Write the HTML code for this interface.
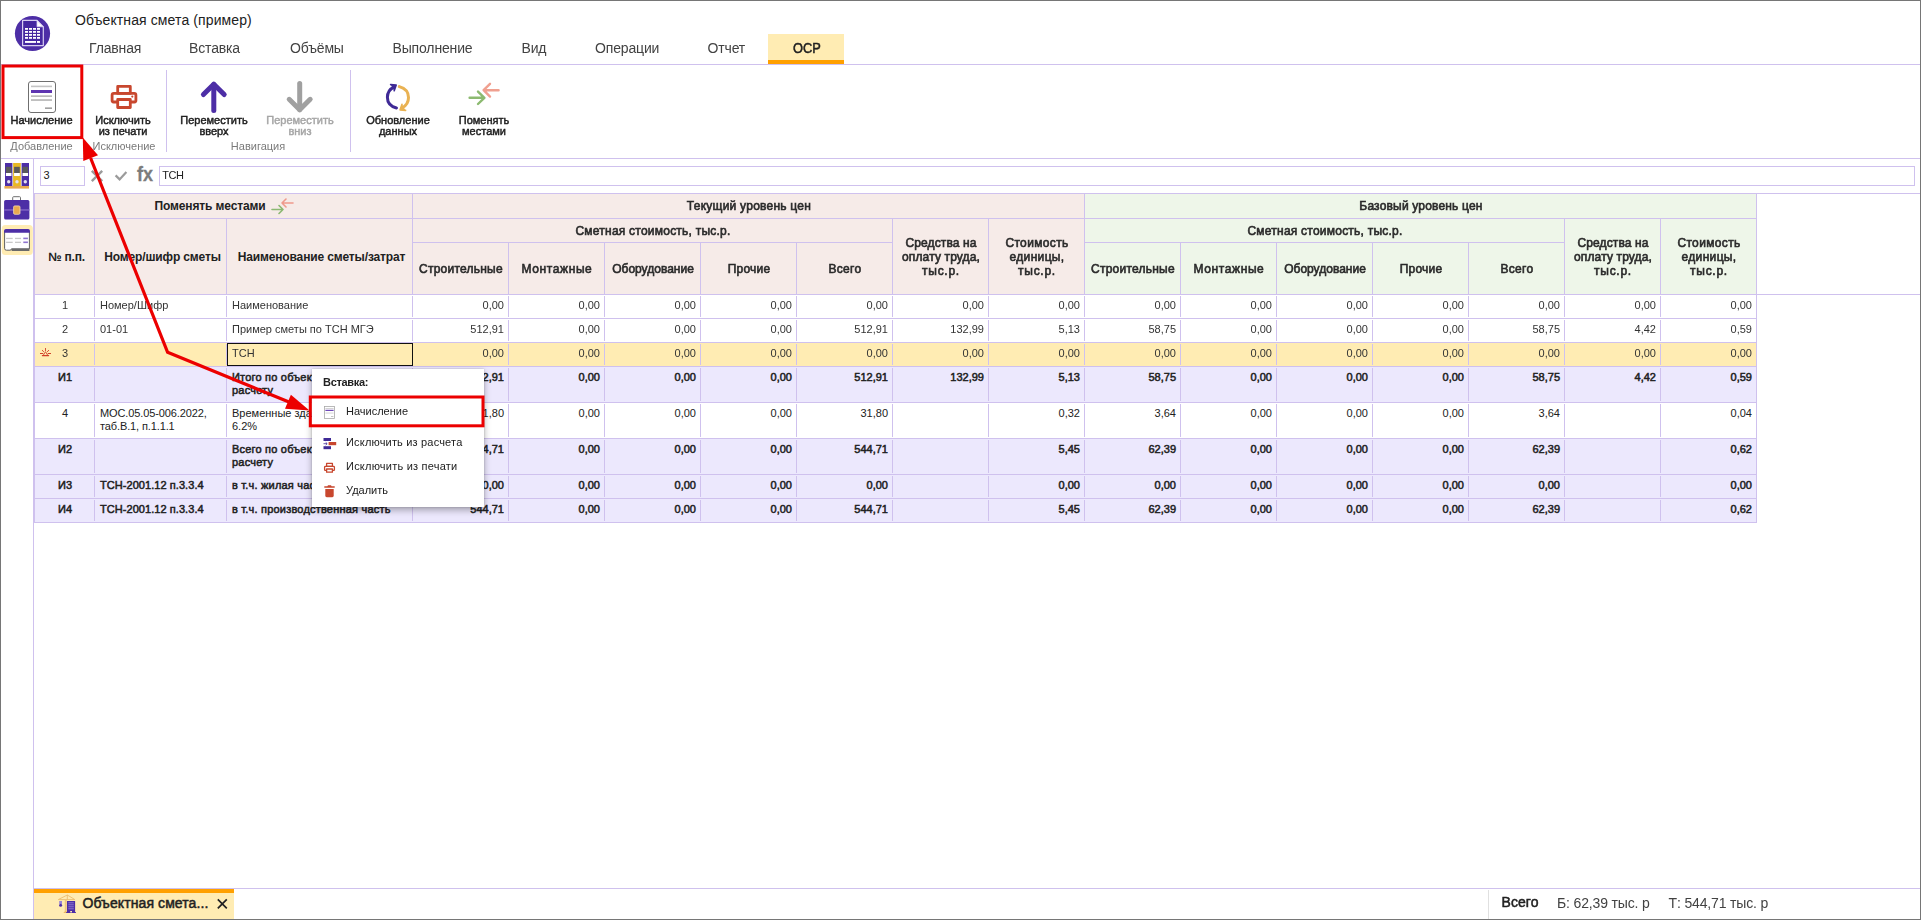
<!DOCTYPE html>
<html lang="ru"><head><meta charset="utf-8"><title>Объектная смета (пример)</title>
<style>
html,body{margin:0;padding:0;}
body{width:1921px;height:920px;position:relative;overflow:hidden;background:#fff;font-family:"Liberation Sans",sans-serif;color:#212121;}
.t{position:absolute;white-space:nowrap;}
.m{font-weight:400 !important;-webkit-text-stroke:0.45px currentColor;}
.bt,.sb,.tabb{-webkit-text-stroke-width:0.5px;}
.hm{font-weight:400 !important;-webkit-text-stroke:0.6px currentColor;color:#2a2a2a;}
.b{position:absolute;}
.c{position:absolute;box-sizing:border-box;overflow:hidden;font-size:11px;line-height:13px;white-space:nowrap;}
.h{position:absolute;box-sizing:border-box;display:flex;align-items:center;justify-content:center;text-align:center;font-weight:700;font-size:12px;line-height:14px;}
svg{position:absolute;overflow:visible;}
</style></head><body>

<svg style="left:14px;top:15px" width="37" height="37" viewBox="0 0 37 37">
<circle cx="18.5" cy="18.5" r="17.6" fill="#4d2ea6"/>
<path d="M8.6 5.4 H23 L29.3 11.8 V30.6 H8.6 Z" fill="#4527a0" stroke="#d9d0f2" stroke-width="1.2" stroke-linejoin="round"/>
<path d="M23 5.4 V11.8 H29.3 Z" fill="#ffffff" stroke="#d9d0f2" stroke-width="0.8"/>
<g fill="#fff">
<rect x="11" y="13" width="3" height="1.8"/><rect x="15" y="13" width="3" height="1.8"/><rect x="19" y="13" width="3" height="1.8"/><rect x="23" y="13" width="3" height="1.8"/>
<rect x="11" y="16" width="3" height="1.8"/><rect x="15" y="16" width="3" height="1.8"/><rect x="19" y="16" width="3" height="1.8"/><rect x="23" y="16" width="3" height="1.8"/>
<rect x="11" y="19" width="3" height="1.8"/><rect x="15" y="19" width="3" height="1.8"/><rect x="19" y="19" width="3" height="1.8"/><rect x="23" y="19" width="3" height="1.8"/>
<rect x="11" y="22" width="3" height="1.8"/><rect x="15" y="22" width="3" height="1.8"/><rect x="19" y="22" width="3" height="1.8"/><rect x="23" y="22" width="3" height="1.8"/>
<rect x="11" y="26" width="11" height="1.9"/><rect x="23" y="26" width="3" height="1.9"/>
</g></svg>
<div class="t title" style="left:75px;top:12px;font-size:14px;line-height:16px;font-weight:400;color:#212121;letter-spacing:0.11px;">Объектная смета (пример)</div>
<div class="b" style="left:768px;top:34px;width:76px;height:30px;background:#ffecb3;"></div>
<div class="b" style="left:768px;top:60px;width:76px;height:4px;background:#ffa000;"></div>
<div class="b" style="left:1px;top:64px;width:1919px;height:1px;background:#cfc1ee;"></div>
<div class="b" style="left:1px;top:158px;width:1919px;height:1px;background:#cfc1ee;"></div>
<div class="b" style="left:166px;top:70px;width:1px;height:82px;background:#cfc1ee;"></div>
<div class="b" style="left:350px;top:70px;width:1px;height:82px;background:#cfc1ee;"></div>
<svg style="left:0;top:0" width="560" height="160" viewBox="0 0 560 160">
<!-- doc -->
<rect x="28.5" y="81.5" width="27" height="31" rx="2.5" fill="#fff" stroke="#6f6f6f" stroke-width="1"/>
<rect x="31" y="85.6" width="21" height="1.6" fill="#c4c4c4"/>
<rect x="31" y="90" width="21" height="3" fill="#5e35b1"/>
<rect x="31" y="95.3" width="21" height="1.7" fill="#b9b9b9"/>
<rect x="31" y="99.2" width="21" height="1.7" fill="#b9b9b9"/>
<rect x="45" y="107.5" width="7" height="1.3" fill="#8a8a8a"/>
<!-- printer -->
<g fill="none" stroke="#c8472e" stroke-width="2.8" stroke-linejoin="round">
<rect x="117.7" y="86.4" width="12.6" height="7"/>
<path d="M117.7 102 H113.5 Q112.1 102 112.1 100.6 V95 Q112.1 93.4 113.7 93.4 H134.3 Q135.9 93.4 135.9 95 V100.6 Q135.9 102 134.5 102 H130.3"/>
<rect x="117.7" y="99.5" width="12.6" height="8"/>
</g>
<circle cx="132.3" cy="96.6" r="1.1" fill="#c8472e"/>
<!-- up arrow -->
<g fill="none" stroke="#4d2ea6" stroke-width="5" stroke-linecap="round" stroke-linejoin="round">
<path d="M213.8 110.5 V84.5"/><path d="M203.4 94.6 L213.8 84.2 L224.2 94.6"/>
</g>
<!-- down arrow -->
<g fill="none" stroke="#a0a0a0" stroke-width="5" stroke-linecap="round" stroke-linejoin="round">
<path d="M299.7 83.5 V109.5"/><path d="M289.2 99.3 L299.7 109.8 L310.2 99.3"/>
</g>
<!-- refresh -->
<g fill="none" stroke-width="3" stroke-linecap="round" stroke-linejoin="round">
<path d="M396.5 108 C390.5 106.5 387.4 102.5 387.4 97.3 C387.4 92.5 390 88.8 394.2 86.8" stroke="#3f2a96"/>
<path d="M390.6 84.6 L396.2 85 L394.2 90.8" stroke="#3f2a96" fill="#3f2a96" stroke-width="1.6"/>
<path d="M399.3 86.6 C405.5 88.3 408.5 92.5 408.5 97.6 C408.5 102.4 406 106 402 108" stroke="#e9b253"/>
<path d="M405.6 110.4 L400 109.9 L402 104.2" stroke="#e9b253" fill="#e9b253" stroke-width="1.6"/>
</g>
<!-- swap -->
<g fill="none" stroke-width="2.4" stroke-linecap="round" stroke-linejoin="round">
<path d="M469.6 97.8 H484 M478 91.6 L484.4 97.8 L478 104" stroke="#8cba70"/>
<path d="M498.6 90.2 H484 M490 83.8 L483.6 90.2 L490 96.6" stroke="#f0a090"/>
</g>
</svg>

<div class="b" style="left:33px;top:159px;width:1px;height:760px;background:#cfc1ee;"></div>
<div class="b" style="left:34px;top:193px;width:1886px;height:1px;background:#cfc1ee;"></div>
<svg style="left:0;top:159px" width="34" height="100" viewBox="0 159 34 100">
<!-- binders -->
<rect x="4.4" y="186" width="24.6" height="2.6" fill="#e9a94e"/>
<rect x="5" y="163" width="7.4" height="23" fill="#4d2ea6"/>
<rect x="13.1" y="163" width="7.7" height="23" fill="#e8b923"/>
<rect x="21.6" y="163" width="7.4" height="23" fill="#4d2ea6"/>
<g><rect x="5.9" y="166.8" width="5.6" height="6.2" fill="#5a5a5a"/><rect x="5.9" y="173" width="5.6" height="3" fill="#fff"/>
<rect x="14.1" y="166.8" width="5.7" height="6.2" fill="#5a5a5a"/><rect x="14.1" y="173" width="5.7" height="3" fill="#fff"/>
<rect x="22.5" y="166.8" width="5.6" height="6.2" fill="#5a5a5a"/><rect x="22.5" y="173" width="5.6" height="3" fill="#fff"/></g>
<circle cx="8.7" cy="181.8" r="1.7" fill="#e4e0ee"/><circle cx="17" cy="181.8" r="1.7" fill="#e4e0ee"/><circle cx="25.3" cy="181.8" r="1.7" fill="#e4e0ee"/>
<!-- briefcase -->
<path d="M12.7 200 V197.6 Q12.7 196.7 13.6 196.7 H19.6 Q20.5 196.7 20.5 197.6 V200" fill="#fff" stroke="#6f6f6f" stroke-width="1"/>
<rect x="4.1" y="200" width="25.3" height="19.6" rx="1.6" fill="#4d2ea6"/>
<rect x="4.1" y="209.2" width="25.3" height="1.5" fill="#7e62c4"/>
<rect x="13.6" y="205.9" width="6.4" height="8.4" rx="1.2" fill="#e9a94e" stroke="#f3d9b0" stroke-width="0.8"/>
<!-- selected window -->
<rect x="1.8" y="225" width="31" height="30" rx="3.5" fill="#ffecb3"/>
<path d="M4.6 231 V248.4 Q4.6 250.2 6.4 250.2 H10 Q11.4 250.2 11.4 248.9 H29.4 V231 Z" fill="#fff" stroke="#5f5f5f" stroke-width="1"/>
<path d="M4.1 232.8 V230.8 Q4.1 229 5.9 229 H28.1 Q29.9 229 29.9 230.8 V232.8 Z" fill="#4d2ea6"/>
<rect x="11.6" y="248.6" width="17.8" height="2.4" fill="#6a6a6a"/>
<g fill="#c9c9c9"><rect x="6.1" y="237.8" width="6.6" height="1.3"/><rect x="15" y="237.8" width="6" height="1.3"/><rect x="6.1" y="241.7" width="6.6" height="1.3"/><rect x="15" y="241.7" width="6" height="1.3"/></g>
<g fill="#8f74cf"><rect x="23.3" y="237.6" width="4.6" height="1.6"/><rect x="23.3" y="241.5" width="4.6" height="1.6"/></g>
</svg>

<div class="b" style="left:40px;top:166px;width:45px;height:20px;border:1px solid #cfc1ee;box-sizing:border-box;background:#fff;"></div>
<div class="t fx" style="left:43.5px;top:169px;font-size:11px;line-height:12px;font-weight:400;color:#212121;letter-spacing:0px;">3</div>
<div class="b" style="left:159px;top:166px;width:1756px;height:20px;border:1px solid #cfc1ee;box-sizing:border-box;background:#fff;"></div>
<svg style="left:86px;top:166px" width="50" height="20" viewBox="86 166 50 20">
<g fill="none" stroke="#9b9b9b" stroke-width="2.4">
<path d="M91.8 170.8 L102.2 181.2 M102.2 170.8 L91.8 181.2"/>
<path d="M115.6 175.4 L119.6 179.4 L126.4 172" stroke-width="2.2"/>
</g></svg>
<div class="t" style="left:137px;top:163.4px;font-size:20px;-webkit-text-stroke:0.3px #7c7c7c;line-height:23px;font-weight:700;color:#7c7c7c;transform:scaleX(0.9);transform-origin:0 0;">fx</div>

<div class="h" style="left:34px;top:193px;width:378px;height:25px;border-left:1px solid #cfc1ee;border-top:1px solid #cfc1ee;background:#f6ebe8;"><span style="padding-left:3px"><span style="letter-spacing:-0.13px">Поменять местами</span></span><svg style="position:static;margin-left:6px;margin-top:-1px" width="24" height="16" viewBox="0 0 24 16"><g fill="none" stroke-width="1.6" stroke-linecap="round" stroke-linejoin="round"><path d="M1 11.5 H12 M8 7.5 L12 11.5 L8 15.5" stroke="#8bb872"/><path d="M22 5 H11 M15 1 L11 5 L15 9" stroke="#ef9a8c"/></g></svg></div>
<div class="h" style="left:34px;top:218px;width:60px;height:76px;border-left:1px solid #cfc1ee;border-top:1px solid #cfc1ee;background:#f6ebe8;"><span style="padding-left:4px"><span style="letter-spacing:-0.2px">№ п.п.</span></span></div>
<div class="h" style="left:94px;top:218px;width:132px;height:76px;border-left:1px solid #cfc1ee;border-top:1px solid #cfc1ee;background:#f6ebe8;"><span style="padding-left:4px"><span style="letter-spacing:-0.13px">Номер/шифр сметы</span></span></div>
<div class="h" style="left:226px;top:218px;width:186px;height:76px;border-left:1px solid #cfc1ee;border-top:1px solid #cfc1ee;background:#f6ebe8;"><span style="padding-left:4px"><span style="letter-spacing:-0.14px">Наименование сметы/затрат</span></span></div>
<div class="h" style="left:412px;top:193px;width:672px;height:25px;border-left:1px solid #cfc1ee;border-top:1px solid #cfc1ee;background:#f6ebe8;"></div>
<div class="h" style="left:412px;top:218px;width:480px;height:24px;border-left:1px solid #cfc1ee;border-top:1px solid #cfc1ee;background:#f6ebe8;"></div>
<div class="h" style="left:412px;top:242px;width:96px;height:52px;border-left:1px solid #cfc1ee;border-top:1px solid #cfc1ee;background:#f6ebe8;"></div>
<div class="h" style="left:508px;top:242px;width:96px;height:52px;border-left:1px solid #cfc1ee;border-top:1px solid #cfc1ee;background:#f6ebe8;"></div>
<div class="h" style="left:604px;top:242px;width:96px;height:52px;border-left:1px solid #cfc1ee;border-top:1px solid #cfc1ee;background:#f6ebe8;"></div>
<div class="h" style="left:700px;top:242px;width:96px;height:52px;border-left:1px solid #cfc1ee;border-top:1px solid #cfc1ee;background:#f6ebe8;"></div>
<div class="h" style="left:796px;top:242px;width:96px;height:52px;border-left:1px solid #cfc1ee;border-top:1px solid #cfc1ee;background:#f6ebe8;"></div>
<div class="h" style="left:892px;top:218px;width:96px;height:76px;border-left:1px solid #cfc1ee;border-top:1px solid #cfc1ee;background:#f6ebe8;"></div>
<div class="h" style="left:988px;top:218px;width:96px;height:76px;border-left:1px solid #cfc1ee;border-top:1px solid #cfc1ee;background:#f6ebe8;"></div>
<div class="h" style="left:1084px;top:193px;width:672px;height:25px;border-left:1px solid #cfc1ee;border-top:1px solid #cfc1ee;background:#eef6e9;"></div>
<div class="h" style="left:1084px;top:218px;width:480px;height:24px;border-left:1px solid #cfc1ee;border-top:1px solid #cfc1ee;background:#eef6e9;"></div>
<div class="h" style="left:1084px;top:242px;width:96px;height:52px;border-left:1px solid #cfc1ee;border-top:1px solid #cfc1ee;background:#eef6e9;"></div>
<div class="h" style="left:1180px;top:242px;width:96px;height:52px;border-left:1px solid #cfc1ee;border-top:1px solid #cfc1ee;background:#eef6e9;"></div>
<div class="h" style="left:1276px;top:242px;width:96px;height:52px;border-left:1px solid #cfc1ee;border-top:1px solid #cfc1ee;background:#eef6e9;"></div>
<div class="h" style="left:1372px;top:242px;width:96px;height:52px;border-left:1px solid #cfc1ee;border-top:1px solid #cfc1ee;background:#eef6e9;"></div>
<div class="h" style="left:1468px;top:242px;width:96px;height:52px;border-left:1px solid #cfc1ee;border-top:1px solid #cfc1ee;background:#eef6e9;"></div>
<div class="h" style="left:1564px;top:218px;width:96px;height:76px;border-left:1px solid #cfc1ee;border-top:1px solid #cfc1ee;background:#eef6e9;"></div>
<div class="h" style="left:1660px;top:218px;width:96px;height:76px;border-left:1px solid #cfc1ee;border-top:1px solid #cfc1ee;background:#eef6e9;"></div>
<div class="b" style="left:1756px;top:193px;width:1px;height:330px;background:#cfc1ee;"></div>
<div class="b" style="left:34px;top:294px;width:1886px;height:1px;background:#cfc1ee;"></div>
<div class="c" style="left:34px;top:294px;width:60px;height:24px;border-top:1px solid #cfc1ee;background:#ffffff;"></div>
<div class="b" style="left:34px;top:294px;width:1px;height:24px;background:#cfc1ee;"></div>
<div class="c" style="left:94px;top:294px;width:132px;height:24px;border-top:1px solid #cfc1ee;background:#ffffff;"></div>
<div class="b" style="left:94px;top:296px;width:1px;height:21px;background:#cfc1ee;"></div>
<div class="c" style="left:226px;top:294px;width:186px;height:24px;border-top:1px solid #cfc1ee;background:#ffffff;"></div>
<div class="b" style="left:226px;top:296px;width:1px;height:21px;background:#cfc1ee;"></div>
<div class="c" style="left:412px;top:294px;width:96px;height:24px;border-top:1px solid #cfc1ee;background:#ffffff;"></div>
<div class="b" style="left:412px;top:296px;width:1px;height:21px;background:#cfc1ee;"></div>
<div class="c" style="left:508px;top:294px;width:96px;height:24px;border-top:1px solid #cfc1ee;background:#ffffff;"></div>
<div class="b" style="left:508px;top:296px;width:1px;height:21px;background:#cfc1ee;"></div>
<div class="c" style="left:604px;top:294px;width:96px;height:24px;border-top:1px solid #cfc1ee;background:#ffffff;"></div>
<div class="b" style="left:604px;top:296px;width:1px;height:21px;background:#cfc1ee;"></div>
<div class="c" style="left:700px;top:294px;width:96px;height:24px;border-top:1px solid #cfc1ee;background:#ffffff;"></div>
<div class="b" style="left:700px;top:296px;width:1px;height:21px;background:#cfc1ee;"></div>
<div class="c" style="left:796px;top:294px;width:96px;height:24px;border-top:1px solid #cfc1ee;background:#ffffff;"></div>
<div class="b" style="left:796px;top:296px;width:1px;height:21px;background:#cfc1ee;"></div>
<div class="c" style="left:892px;top:294px;width:96px;height:24px;border-top:1px solid #cfc1ee;background:#ffffff;"></div>
<div class="b" style="left:892px;top:296px;width:1px;height:21px;background:#cfc1ee;"></div>
<div class="c" style="left:988px;top:294px;width:96px;height:24px;border-top:1px solid #cfc1ee;background:#ffffff;"></div>
<div class="b" style="left:988px;top:296px;width:1px;height:21px;background:#cfc1ee;"></div>
<div class="c" style="left:1084px;top:294px;width:96px;height:24px;border-top:1px solid #cfc1ee;background:#ffffff;"></div>
<div class="b" style="left:1084px;top:296px;width:1px;height:21px;background:#cfc1ee;"></div>
<div class="c" style="left:1180px;top:294px;width:96px;height:24px;border-top:1px solid #cfc1ee;background:#ffffff;"></div>
<div class="b" style="left:1180px;top:296px;width:1px;height:21px;background:#cfc1ee;"></div>
<div class="c" style="left:1276px;top:294px;width:96px;height:24px;border-top:1px solid #cfc1ee;background:#ffffff;"></div>
<div class="b" style="left:1276px;top:296px;width:1px;height:21px;background:#cfc1ee;"></div>
<div class="c" style="left:1372px;top:294px;width:96px;height:24px;border-top:1px solid #cfc1ee;background:#ffffff;"></div>
<div class="b" style="left:1372px;top:296px;width:1px;height:21px;background:#cfc1ee;"></div>
<div class="c" style="left:1468px;top:294px;width:96px;height:24px;border-top:1px solid #cfc1ee;background:#ffffff;"></div>
<div class="b" style="left:1468px;top:296px;width:1px;height:21px;background:#cfc1ee;"></div>
<div class="c" style="left:1564px;top:294px;width:96px;height:24px;border-top:1px solid #cfc1ee;background:#ffffff;"></div>
<div class="b" style="left:1564px;top:296px;width:1px;height:21px;background:#cfc1ee;"></div>
<div class="c" style="left:1660px;top:294px;width:96px;height:24px;border-top:1px solid #cfc1ee;background:#ffffff;"></div>
<div class="b" style="left:1660px;top:296px;width:1px;height:21px;background:#cfc1ee;"></div>
<div class="c" style="left:34px;top:318px;width:60px;height:24px;border-top:1px solid #cfc1ee;background:#ffffff;"></div>
<div class="b" style="left:34px;top:318px;width:1px;height:24px;background:#cfc1ee;"></div>
<div class="c" style="left:94px;top:318px;width:132px;height:24px;border-top:1px solid #cfc1ee;background:#ffffff;"></div>
<div class="b" style="left:94px;top:320px;width:1px;height:21px;background:#cfc1ee;"></div>
<div class="c" style="left:226px;top:318px;width:186px;height:24px;border-top:1px solid #cfc1ee;background:#ffffff;"></div>
<div class="b" style="left:226px;top:320px;width:1px;height:21px;background:#cfc1ee;"></div>
<div class="c" style="left:412px;top:318px;width:96px;height:24px;border-top:1px solid #cfc1ee;background:#ffffff;"></div>
<div class="b" style="left:412px;top:320px;width:1px;height:21px;background:#cfc1ee;"></div>
<div class="c" style="left:508px;top:318px;width:96px;height:24px;border-top:1px solid #cfc1ee;background:#ffffff;"></div>
<div class="b" style="left:508px;top:320px;width:1px;height:21px;background:#cfc1ee;"></div>
<div class="c" style="left:604px;top:318px;width:96px;height:24px;border-top:1px solid #cfc1ee;background:#ffffff;"></div>
<div class="b" style="left:604px;top:320px;width:1px;height:21px;background:#cfc1ee;"></div>
<div class="c" style="left:700px;top:318px;width:96px;height:24px;border-top:1px solid #cfc1ee;background:#ffffff;"></div>
<div class="b" style="left:700px;top:320px;width:1px;height:21px;background:#cfc1ee;"></div>
<div class="c" style="left:796px;top:318px;width:96px;height:24px;border-top:1px solid #cfc1ee;background:#ffffff;"></div>
<div class="b" style="left:796px;top:320px;width:1px;height:21px;background:#cfc1ee;"></div>
<div class="c" style="left:892px;top:318px;width:96px;height:24px;border-top:1px solid #cfc1ee;background:#ffffff;"></div>
<div class="b" style="left:892px;top:320px;width:1px;height:21px;background:#cfc1ee;"></div>
<div class="c" style="left:988px;top:318px;width:96px;height:24px;border-top:1px solid #cfc1ee;background:#ffffff;"></div>
<div class="b" style="left:988px;top:320px;width:1px;height:21px;background:#cfc1ee;"></div>
<div class="c" style="left:1084px;top:318px;width:96px;height:24px;border-top:1px solid #cfc1ee;background:#ffffff;"></div>
<div class="b" style="left:1084px;top:320px;width:1px;height:21px;background:#cfc1ee;"></div>
<div class="c" style="left:1180px;top:318px;width:96px;height:24px;border-top:1px solid #cfc1ee;background:#ffffff;"></div>
<div class="b" style="left:1180px;top:320px;width:1px;height:21px;background:#cfc1ee;"></div>
<div class="c" style="left:1276px;top:318px;width:96px;height:24px;border-top:1px solid #cfc1ee;background:#ffffff;"></div>
<div class="b" style="left:1276px;top:320px;width:1px;height:21px;background:#cfc1ee;"></div>
<div class="c" style="left:1372px;top:318px;width:96px;height:24px;border-top:1px solid #cfc1ee;background:#ffffff;"></div>
<div class="b" style="left:1372px;top:320px;width:1px;height:21px;background:#cfc1ee;"></div>
<div class="c" style="left:1468px;top:318px;width:96px;height:24px;border-top:1px solid #cfc1ee;background:#ffffff;"></div>
<div class="b" style="left:1468px;top:320px;width:1px;height:21px;background:#cfc1ee;"></div>
<div class="c" style="left:1564px;top:318px;width:96px;height:24px;border-top:1px solid #cfc1ee;background:#ffffff;"></div>
<div class="b" style="left:1564px;top:320px;width:1px;height:21px;background:#cfc1ee;"></div>
<div class="c" style="left:1660px;top:318px;width:96px;height:24px;border-top:1px solid #cfc1ee;background:#ffffff;"></div>
<div class="b" style="left:1660px;top:320px;width:1px;height:21px;background:#cfc1ee;"></div>
<div class="c" style="left:34px;top:342px;width:60px;height:24px;border-top:1px solid #cfc1ee;background:#ffecb3;"></div>
<div class="b" style="left:34px;top:342px;width:1px;height:24px;background:#cfc1ee;"></div>
<div class="c" style="left:94px;top:342px;width:132px;height:24px;border-top:1px solid #cfc1ee;background:#ffecb3;"></div>
<div class="b" style="left:94px;top:344px;width:1px;height:21px;background:#cfc1ee;"></div>
<div class="c" style="left:226px;top:342px;width:186px;height:24px;border-top:1px solid #cfc1ee;background:#ffecb3;"></div>
<div class="b" style="left:226px;top:344px;width:1px;height:21px;background:#cfc1ee;"></div>
<div class="c" style="left:412px;top:342px;width:96px;height:24px;border-top:1px solid #cfc1ee;background:#ffecb3;"></div>
<div class="b" style="left:412px;top:344px;width:1px;height:21px;background:#cfc1ee;"></div>
<div class="c" style="left:508px;top:342px;width:96px;height:24px;border-top:1px solid #cfc1ee;background:#ffecb3;"></div>
<div class="b" style="left:508px;top:344px;width:1px;height:21px;background:#cfc1ee;"></div>
<div class="c" style="left:604px;top:342px;width:96px;height:24px;border-top:1px solid #cfc1ee;background:#ffecb3;"></div>
<div class="b" style="left:604px;top:344px;width:1px;height:21px;background:#cfc1ee;"></div>
<div class="c" style="left:700px;top:342px;width:96px;height:24px;border-top:1px solid #cfc1ee;background:#ffecb3;"></div>
<div class="b" style="left:700px;top:344px;width:1px;height:21px;background:#cfc1ee;"></div>
<div class="c" style="left:796px;top:342px;width:96px;height:24px;border-top:1px solid #cfc1ee;background:#ffecb3;"></div>
<div class="b" style="left:796px;top:344px;width:1px;height:21px;background:#cfc1ee;"></div>
<div class="c" style="left:892px;top:342px;width:96px;height:24px;border-top:1px solid #cfc1ee;background:#ffecb3;"></div>
<div class="b" style="left:892px;top:344px;width:1px;height:21px;background:#cfc1ee;"></div>
<div class="c" style="left:988px;top:342px;width:96px;height:24px;border-top:1px solid #cfc1ee;background:#ffecb3;"></div>
<div class="b" style="left:988px;top:344px;width:1px;height:21px;background:#cfc1ee;"></div>
<div class="c" style="left:1084px;top:342px;width:96px;height:24px;border-top:1px solid #cfc1ee;background:#ffecb3;"></div>
<div class="b" style="left:1084px;top:344px;width:1px;height:21px;background:#cfc1ee;"></div>
<div class="c" style="left:1180px;top:342px;width:96px;height:24px;border-top:1px solid #cfc1ee;background:#ffecb3;"></div>
<div class="b" style="left:1180px;top:344px;width:1px;height:21px;background:#cfc1ee;"></div>
<div class="c" style="left:1276px;top:342px;width:96px;height:24px;border-top:1px solid #cfc1ee;background:#ffecb3;"></div>
<div class="b" style="left:1276px;top:344px;width:1px;height:21px;background:#cfc1ee;"></div>
<div class="c" style="left:1372px;top:342px;width:96px;height:24px;border-top:1px solid #cfc1ee;background:#ffecb3;"></div>
<div class="b" style="left:1372px;top:344px;width:1px;height:21px;background:#cfc1ee;"></div>
<div class="c" style="left:1468px;top:342px;width:96px;height:24px;border-top:1px solid #cfc1ee;background:#ffecb3;"></div>
<div class="b" style="left:1468px;top:344px;width:1px;height:21px;background:#cfc1ee;"></div>
<div class="c" style="left:1564px;top:342px;width:96px;height:24px;border-top:1px solid #cfc1ee;background:#ffecb3;"></div>
<div class="b" style="left:1564px;top:344px;width:1px;height:21px;background:#cfc1ee;"></div>
<div class="c" style="left:1660px;top:342px;width:96px;height:24px;border-top:1px solid #cfc1ee;background:#ffecb3;"></div>
<div class="b" style="left:1660px;top:344px;width:1px;height:21px;background:#cfc1ee;"></div>
<div class="c" style="left:34px;top:366px;width:60px;height:36px;border-top:1px solid #cfc1ee;background:#ece8fd;text-align:center;padding:4px 0 0 2px;-webkit-text-stroke:0.5px currentColor;letter-spacing:0px;"><span>И1</span></div>
<div class="b" style="left:34px;top:366px;width:1px;height:36px;background:#cfc1ee;"></div>
<div class="c" style="left:94px;top:366px;width:132px;height:36px;border-top:1px solid #cfc1ee;background:#ece8fd;text-align:left;padding:4px 0 0 6px;-webkit-text-stroke:0.5px currentColor;letter-spacing:0.06px;"><span></span></div>
<div class="b" style="left:94px;top:368px;width:1px;height:33px;background:#cfc1ee;"></div>
<div class="c" style="left:226px;top:366px;width:186px;height:36px;border-top:1px solid #cfc1ee;background:#ece8fd;text-align:left;padding:4px 0 0 6px;-webkit-text-stroke:0.5px currentColor;letter-spacing:0.2px;"><span>Итого по объектному сметному<br>расчету</span></div>
<div class="b" style="left:226px;top:368px;width:1px;height:33px;background:#cfc1ee;"></div>
<div class="c" style="left:412px;top:366px;width:96px;height:36px;border-top:1px solid #cfc1ee;background:#ece8fd;text-align:right;padding:4px 4px 0 0;-webkit-text-stroke:0.5px currentColor;letter-spacing:0px;"><span>512,91</span></div>
<div class="b" style="left:412px;top:368px;width:1px;height:33px;background:#cfc1ee;"></div>
<div class="c" style="left:508px;top:366px;width:96px;height:36px;border-top:1px solid #cfc1ee;background:#ece8fd;text-align:right;padding:4px 4px 0 0;-webkit-text-stroke:0.5px currentColor;letter-spacing:0px;"><span>0,00</span></div>
<div class="b" style="left:508px;top:368px;width:1px;height:33px;background:#cfc1ee;"></div>
<div class="c" style="left:604px;top:366px;width:96px;height:36px;border-top:1px solid #cfc1ee;background:#ece8fd;text-align:right;padding:4px 4px 0 0;-webkit-text-stroke:0.5px currentColor;letter-spacing:0px;"><span>0,00</span></div>
<div class="b" style="left:604px;top:368px;width:1px;height:33px;background:#cfc1ee;"></div>
<div class="c" style="left:700px;top:366px;width:96px;height:36px;border-top:1px solid #cfc1ee;background:#ece8fd;text-align:right;padding:4px 4px 0 0;-webkit-text-stroke:0.5px currentColor;letter-spacing:0px;"><span>0,00</span></div>
<div class="b" style="left:700px;top:368px;width:1px;height:33px;background:#cfc1ee;"></div>
<div class="c" style="left:796px;top:366px;width:96px;height:36px;border-top:1px solid #cfc1ee;background:#ece8fd;text-align:right;padding:4px 4px 0 0;-webkit-text-stroke:0.5px currentColor;letter-spacing:0px;"><span>512,91</span></div>
<div class="b" style="left:796px;top:368px;width:1px;height:33px;background:#cfc1ee;"></div>
<div class="c" style="left:892px;top:366px;width:96px;height:36px;border-top:1px solid #cfc1ee;background:#ece8fd;text-align:right;padding:4px 4px 0 0;-webkit-text-stroke:0.5px currentColor;letter-spacing:0px;"><span>132,99</span></div>
<div class="b" style="left:892px;top:368px;width:1px;height:33px;background:#cfc1ee;"></div>
<div class="c" style="left:988px;top:366px;width:96px;height:36px;border-top:1px solid #cfc1ee;background:#ece8fd;text-align:right;padding:4px 4px 0 0;-webkit-text-stroke:0.5px currentColor;letter-spacing:0px;"><span>5,13</span></div>
<div class="b" style="left:988px;top:368px;width:1px;height:33px;background:#cfc1ee;"></div>
<div class="c" style="left:1084px;top:366px;width:96px;height:36px;border-top:1px solid #cfc1ee;background:#ece8fd;text-align:right;padding:4px 4px 0 0;-webkit-text-stroke:0.5px currentColor;letter-spacing:0px;"><span>58,75</span></div>
<div class="b" style="left:1084px;top:368px;width:1px;height:33px;background:#cfc1ee;"></div>
<div class="c" style="left:1180px;top:366px;width:96px;height:36px;border-top:1px solid #cfc1ee;background:#ece8fd;text-align:right;padding:4px 4px 0 0;-webkit-text-stroke:0.5px currentColor;letter-spacing:0px;"><span>0,00</span></div>
<div class="b" style="left:1180px;top:368px;width:1px;height:33px;background:#cfc1ee;"></div>
<div class="c" style="left:1276px;top:366px;width:96px;height:36px;border-top:1px solid #cfc1ee;background:#ece8fd;text-align:right;padding:4px 4px 0 0;-webkit-text-stroke:0.5px currentColor;letter-spacing:0px;"><span>0,00</span></div>
<div class="b" style="left:1276px;top:368px;width:1px;height:33px;background:#cfc1ee;"></div>
<div class="c" style="left:1372px;top:366px;width:96px;height:36px;border-top:1px solid #cfc1ee;background:#ece8fd;text-align:right;padding:4px 4px 0 0;-webkit-text-stroke:0.5px currentColor;letter-spacing:0px;"><span>0,00</span></div>
<div class="b" style="left:1372px;top:368px;width:1px;height:33px;background:#cfc1ee;"></div>
<div class="c" style="left:1468px;top:366px;width:96px;height:36px;border-top:1px solid #cfc1ee;background:#ece8fd;text-align:right;padding:4px 4px 0 0;-webkit-text-stroke:0.5px currentColor;letter-spacing:0px;"><span>58,75</span></div>
<div class="b" style="left:1468px;top:368px;width:1px;height:33px;background:#cfc1ee;"></div>
<div class="c" style="left:1564px;top:366px;width:96px;height:36px;border-top:1px solid #cfc1ee;background:#ece8fd;text-align:right;padding:4px 4px 0 0;-webkit-text-stroke:0.5px currentColor;letter-spacing:0px;"><span>4,42</span></div>
<div class="b" style="left:1564px;top:368px;width:1px;height:33px;background:#cfc1ee;"></div>
<div class="c" style="left:1660px;top:366px;width:96px;height:36px;border-top:1px solid #cfc1ee;background:#ece8fd;text-align:right;padding:4px 4px 0 0;-webkit-text-stroke:0.5px currentColor;letter-spacing:0px;"><span>0,59</span></div>
<div class="b" style="left:1660px;top:368px;width:1px;height:33px;background:#cfc1ee;"></div>
<div class="c" style="left:34px;top:402px;width:60px;height:36px;border-top:1px solid #cfc1ee;background:#ffffff;text-align:center;padding:4px 0 0 2px;"><span>4</span></div>
<div class="b" style="left:34px;top:402px;width:1px;height:36px;background:#cfc1ee;"></div>
<div class="c" style="left:94px;top:402px;width:132px;height:36px;border-top:1px solid #cfc1ee;background:#ffffff;text-align:left;padding:4px 0 0 6px;"><span><span style="letter-spacing:-0.12px">МОС.05.05-006.2022,<br>таб.В.1, п.1.1.1</span></span></div>
<div class="b" style="left:94px;top:404px;width:1px;height:33px;background:#cfc1ee;"></div>
<div class="c" style="left:226px;top:402px;width:186px;height:36px;border-top:1px solid #cfc1ee;background:#ffffff;text-align:left;padding:4px 0 0 6px;"><span>Временные здания и сооружения<br>6.2%</span></div>
<div class="b" style="left:226px;top:404px;width:1px;height:33px;background:#cfc1ee;"></div>
<div class="c" style="left:412px;top:402px;width:96px;height:36px;border-top:1px solid #cfc1ee;background:#ffffff;text-align:right;padding:4px 4px 0 0;"><span>31,80</span></div>
<div class="b" style="left:412px;top:404px;width:1px;height:33px;background:#cfc1ee;"></div>
<div class="c" style="left:508px;top:402px;width:96px;height:36px;border-top:1px solid #cfc1ee;background:#ffffff;text-align:right;padding:4px 4px 0 0;"><span>0,00</span></div>
<div class="b" style="left:508px;top:404px;width:1px;height:33px;background:#cfc1ee;"></div>
<div class="c" style="left:604px;top:402px;width:96px;height:36px;border-top:1px solid #cfc1ee;background:#ffffff;text-align:right;padding:4px 4px 0 0;"><span>0,00</span></div>
<div class="b" style="left:604px;top:404px;width:1px;height:33px;background:#cfc1ee;"></div>
<div class="c" style="left:700px;top:402px;width:96px;height:36px;border-top:1px solid #cfc1ee;background:#ffffff;text-align:right;padding:4px 4px 0 0;"><span>0,00</span></div>
<div class="b" style="left:700px;top:404px;width:1px;height:33px;background:#cfc1ee;"></div>
<div class="c" style="left:796px;top:402px;width:96px;height:36px;border-top:1px solid #cfc1ee;background:#ffffff;text-align:right;padding:4px 4px 0 0;"><span>31,80</span></div>
<div class="b" style="left:796px;top:404px;width:1px;height:33px;background:#cfc1ee;"></div>
<div class="c" style="left:892px;top:402px;width:96px;height:36px;border-top:1px solid #cfc1ee;background:#ffffff;text-align:right;padding:4px 4px 0 0;"><span></span></div>
<div class="b" style="left:892px;top:404px;width:1px;height:33px;background:#cfc1ee;"></div>
<div class="c" style="left:988px;top:402px;width:96px;height:36px;border-top:1px solid #cfc1ee;background:#ffffff;text-align:right;padding:4px 4px 0 0;"><span>0,32</span></div>
<div class="b" style="left:988px;top:404px;width:1px;height:33px;background:#cfc1ee;"></div>
<div class="c" style="left:1084px;top:402px;width:96px;height:36px;border-top:1px solid #cfc1ee;background:#ffffff;text-align:right;padding:4px 4px 0 0;"><span>3,64</span></div>
<div class="b" style="left:1084px;top:404px;width:1px;height:33px;background:#cfc1ee;"></div>
<div class="c" style="left:1180px;top:402px;width:96px;height:36px;border-top:1px solid #cfc1ee;background:#ffffff;text-align:right;padding:4px 4px 0 0;"><span>0,00</span></div>
<div class="b" style="left:1180px;top:404px;width:1px;height:33px;background:#cfc1ee;"></div>
<div class="c" style="left:1276px;top:402px;width:96px;height:36px;border-top:1px solid #cfc1ee;background:#ffffff;text-align:right;padding:4px 4px 0 0;"><span>0,00</span></div>
<div class="b" style="left:1276px;top:404px;width:1px;height:33px;background:#cfc1ee;"></div>
<div class="c" style="left:1372px;top:402px;width:96px;height:36px;border-top:1px solid #cfc1ee;background:#ffffff;text-align:right;padding:4px 4px 0 0;"><span>0,00</span></div>
<div class="b" style="left:1372px;top:404px;width:1px;height:33px;background:#cfc1ee;"></div>
<div class="c" style="left:1468px;top:402px;width:96px;height:36px;border-top:1px solid #cfc1ee;background:#ffffff;text-align:right;padding:4px 4px 0 0;"><span>3,64</span></div>
<div class="b" style="left:1468px;top:404px;width:1px;height:33px;background:#cfc1ee;"></div>
<div class="c" style="left:1564px;top:402px;width:96px;height:36px;border-top:1px solid #cfc1ee;background:#ffffff;text-align:right;padding:4px 4px 0 0;"><span></span></div>
<div class="b" style="left:1564px;top:404px;width:1px;height:33px;background:#cfc1ee;"></div>
<div class="c" style="left:1660px;top:402px;width:96px;height:36px;border-top:1px solid #cfc1ee;background:#ffffff;text-align:right;padding:4px 4px 0 0;"><span>0,04</span></div>
<div class="b" style="left:1660px;top:404px;width:1px;height:33px;background:#cfc1ee;"></div>
<div class="c" style="left:34px;top:438px;width:60px;height:36px;border-top:1px solid #cfc1ee;background:#ece8fd;text-align:center;padding:4px 0 0 2px;-webkit-text-stroke:0.5px currentColor;letter-spacing:0px;"><span>И2</span></div>
<div class="b" style="left:34px;top:438px;width:1px;height:36px;background:#cfc1ee;"></div>
<div class="c" style="left:94px;top:438px;width:132px;height:36px;border-top:1px solid #cfc1ee;background:#ece8fd;text-align:left;padding:4px 0 0 6px;-webkit-text-stroke:0.5px currentColor;letter-spacing:0.06px;"><span></span></div>
<div class="b" style="left:94px;top:440px;width:1px;height:33px;background:#cfc1ee;"></div>
<div class="c" style="left:226px;top:438px;width:186px;height:36px;border-top:1px solid #cfc1ee;background:#ece8fd;text-align:left;padding:4px 0 0 6px;-webkit-text-stroke:0.5px currentColor;letter-spacing:0.2px;"><span>Всего по объектному сметному<br>расчету</span></div>
<div class="b" style="left:226px;top:440px;width:1px;height:33px;background:#cfc1ee;"></div>
<div class="c" style="left:412px;top:438px;width:96px;height:36px;border-top:1px solid #cfc1ee;background:#ece8fd;text-align:right;padding:4px 4px 0 0;-webkit-text-stroke:0.5px currentColor;letter-spacing:0px;"><span>544,71</span></div>
<div class="b" style="left:412px;top:440px;width:1px;height:33px;background:#cfc1ee;"></div>
<div class="c" style="left:508px;top:438px;width:96px;height:36px;border-top:1px solid #cfc1ee;background:#ece8fd;text-align:right;padding:4px 4px 0 0;-webkit-text-stroke:0.5px currentColor;letter-spacing:0px;"><span>0,00</span></div>
<div class="b" style="left:508px;top:440px;width:1px;height:33px;background:#cfc1ee;"></div>
<div class="c" style="left:604px;top:438px;width:96px;height:36px;border-top:1px solid #cfc1ee;background:#ece8fd;text-align:right;padding:4px 4px 0 0;-webkit-text-stroke:0.5px currentColor;letter-spacing:0px;"><span>0,00</span></div>
<div class="b" style="left:604px;top:440px;width:1px;height:33px;background:#cfc1ee;"></div>
<div class="c" style="left:700px;top:438px;width:96px;height:36px;border-top:1px solid #cfc1ee;background:#ece8fd;text-align:right;padding:4px 4px 0 0;-webkit-text-stroke:0.5px currentColor;letter-spacing:0px;"><span>0,00</span></div>
<div class="b" style="left:700px;top:440px;width:1px;height:33px;background:#cfc1ee;"></div>
<div class="c" style="left:796px;top:438px;width:96px;height:36px;border-top:1px solid #cfc1ee;background:#ece8fd;text-align:right;padding:4px 4px 0 0;-webkit-text-stroke:0.5px currentColor;letter-spacing:0px;"><span>544,71</span></div>
<div class="b" style="left:796px;top:440px;width:1px;height:33px;background:#cfc1ee;"></div>
<div class="c" style="left:892px;top:438px;width:96px;height:36px;border-top:1px solid #cfc1ee;background:#ece8fd;text-align:right;padding:4px 4px 0 0;-webkit-text-stroke:0.5px currentColor;letter-spacing:0px;"><span></span></div>
<div class="b" style="left:892px;top:440px;width:1px;height:33px;background:#cfc1ee;"></div>
<div class="c" style="left:988px;top:438px;width:96px;height:36px;border-top:1px solid #cfc1ee;background:#ece8fd;text-align:right;padding:4px 4px 0 0;-webkit-text-stroke:0.5px currentColor;letter-spacing:0px;"><span>5,45</span></div>
<div class="b" style="left:988px;top:440px;width:1px;height:33px;background:#cfc1ee;"></div>
<div class="c" style="left:1084px;top:438px;width:96px;height:36px;border-top:1px solid #cfc1ee;background:#ece8fd;text-align:right;padding:4px 4px 0 0;-webkit-text-stroke:0.5px currentColor;letter-spacing:0px;"><span>62,39</span></div>
<div class="b" style="left:1084px;top:440px;width:1px;height:33px;background:#cfc1ee;"></div>
<div class="c" style="left:1180px;top:438px;width:96px;height:36px;border-top:1px solid #cfc1ee;background:#ece8fd;text-align:right;padding:4px 4px 0 0;-webkit-text-stroke:0.5px currentColor;letter-spacing:0px;"><span>0,00</span></div>
<div class="b" style="left:1180px;top:440px;width:1px;height:33px;background:#cfc1ee;"></div>
<div class="c" style="left:1276px;top:438px;width:96px;height:36px;border-top:1px solid #cfc1ee;background:#ece8fd;text-align:right;padding:4px 4px 0 0;-webkit-text-stroke:0.5px currentColor;letter-spacing:0px;"><span>0,00</span></div>
<div class="b" style="left:1276px;top:440px;width:1px;height:33px;background:#cfc1ee;"></div>
<div class="c" style="left:1372px;top:438px;width:96px;height:36px;border-top:1px solid #cfc1ee;background:#ece8fd;text-align:right;padding:4px 4px 0 0;-webkit-text-stroke:0.5px currentColor;letter-spacing:0px;"><span>0,00</span></div>
<div class="b" style="left:1372px;top:440px;width:1px;height:33px;background:#cfc1ee;"></div>
<div class="c" style="left:1468px;top:438px;width:96px;height:36px;border-top:1px solid #cfc1ee;background:#ece8fd;text-align:right;padding:4px 4px 0 0;-webkit-text-stroke:0.5px currentColor;letter-spacing:0px;"><span>62,39</span></div>
<div class="b" style="left:1468px;top:440px;width:1px;height:33px;background:#cfc1ee;"></div>
<div class="c" style="left:1564px;top:438px;width:96px;height:36px;border-top:1px solid #cfc1ee;background:#ece8fd;text-align:right;padding:4px 4px 0 0;-webkit-text-stroke:0.5px currentColor;letter-spacing:0px;"><span></span></div>
<div class="b" style="left:1564px;top:440px;width:1px;height:33px;background:#cfc1ee;"></div>
<div class="c" style="left:1660px;top:438px;width:96px;height:36px;border-top:1px solid #cfc1ee;background:#ece8fd;text-align:right;padding:4px 4px 0 0;-webkit-text-stroke:0.5px currentColor;letter-spacing:0px;"><span>0,62</span></div>
<div class="b" style="left:1660px;top:440px;width:1px;height:33px;background:#cfc1ee;"></div>
<div class="c" style="left:34px;top:474px;width:60px;height:24px;border-top:1px solid #cfc1ee;background:#ece8fd;text-align:center;padding:4px 0 0 2px;-webkit-text-stroke:0.5px currentColor;letter-spacing:0px;"><span>И3</span></div>
<div class="b" style="left:34px;top:474px;width:1px;height:24px;background:#cfc1ee;"></div>
<div class="c" style="left:94px;top:474px;width:132px;height:24px;border-top:1px solid #cfc1ee;background:#ece8fd;text-align:left;padding:4px 0 0 6px;-webkit-text-stroke:0.5px currentColor;letter-spacing:0.06px;"><span>ТСН-2001.12 п.3.3.4</span></div>
<div class="b" style="left:94px;top:476px;width:1px;height:21px;background:#cfc1ee;"></div>
<div class="c" style="left:226px;top:474px;width:186px;height:24px;border-top:1px solid #cfc1ee;background:#ece8fd;text-align:left;padding:4px 0 0 6px;-webkit-text-stroke:0.5px currentColor;letter-spacing:0.2px;"><span>в т.ч. жилая часть</span></div>
<div class="b" style="left:226px;top:476px;width:1px;height:21px;background:#cfc1ee;"></div>
<div class="c" style="left:412px;top:474px;width:96px;height:24px;border-top:1px solid #cfc1ee;background:#ece8fd;text-align:right;padding:4px 4px 0 0;-webkit-text-stroke:0.5px currentColor;letter-spacing:0px;"><span>0,00</span></div>
<div class="b" style="left:412px;top:476px;width:1px;height:21px;background:#cfc1ee;"></div>
<div class="c" style="left:508px;top:474px;width:96px;height:24px;border-top:1px solid #cfc1ee;background:#ece8fd;text-align:right;padding:4px 4px 0 0;-webkit-text-stroke:0.5px currentColor;letter-spacing:0px;"><span>0,00</span></div>
<div class="b" style="left:508px;top:476px;width:1px;height:21px;background:#cfc1ee;"></div>
<div class="c" style="left:604px;top:474px;width:96px;height:24px;border-top:1px solid #cfc1ee;background:#ece8fd;text-align:right;padding:4px 4px 0 0;-webkit-text-stroke:0.5px currentColor;letter-spacing:0px;"><span>0,00</span></div>
<div class="b" style="left:604px;top:476px;width:1px;height:21px;background:#cfc1ee;"></div>
<div class="c" style="left:700px;top:474px;width:96px;height:24px;border-top:1px solid #cfc1ee;background:#ece8fd;text-align:right;padding:4px 4px 0 0;-webkit-text-stroke:0.5px currentColor;letter-spacing:0px;"><span>0,00</span></div>
<div class="b" style="left:700px;top:476px;width:1px;height:21px;background:#cfc1ee;"></div>
<div class="c" style="left:796px;top:474px;width:96px;height:24px;border-top:1px solid #cfc1ee;background:#ece8fd;text-align:right;padding:4px 4px 0 0;-webkit-text-stroke:0.5px currentColor;letter-spacing:0px;"><span>0,00</span></div>
<div class="b" style="left:796px;top:476px;width:1px;height:21px;background:#cfc1ee;"></div>
<div class="c" style="left:892px;top:474px;width:96px;height:24px;border-top:1px solid #cfc1ee;background:#ece8fd;text-align:right;padding:4px 4px 0 0;-webkit-text-stroke:0.5px currentColor;letter-spacing:0px;"><span></span></div>
<div class="b" style="left:892px;top:476px;width:1px;height:21px;background:#cfc1ee;"></div>
<div class="c" style="left:988px;top:474px;width:96px;height:24px;border-top:1px solid #cfc1ee;background:#ece8fd;text-align:right;padding:4px 4px 0 0;-webkit-text-stroke:0.5px currentColor;letter-spacing:0px;"><span>0,00</span></div>
<div class="b" style="left:988px;top:476px;width:1px;height:21px;background:#cfc1ee;"></div>
<div class="c" style="left:1084px;top:474px;width:96px;height:24px;border-top:1px solid #cfc1ee;background:#ece8fd;text-align:right;padding:4px 4px 0 0;-webkit-text-stroke:0.5px currentColor;letter-spacing:0px;"><span>0,00</span></div>
<div class="b" style="left:1084px;top:476px;width:1px;height:21px;background:#cfc1ee;"></div>
<div class="c" style="left:1180px;top:474px;width:96px;height:24px;border-top:1px solid #cfc1ee;background:#ece8fd;text-align:right;padding:4px 4px 0 0;-webkit-text-stroke:0.5px currentColor;letter-spacing:0px;"><span>0,00</span></div>
<div class="b" style="left:1180px;top:476px;width:1px;height:21px;background:#cfc1ee;"></div>
<div class="c" style="left:1276px;top:474px;width:96px;height:24px;border-top:1px solid #cfc1ee;background:#ece8fd;text-align:right;padding:4px 4px 0 0;-webkit-text-stroke:0.5px currentColor;letter-spacing:0px;"><span>0,00</span></div>
<div class="b" style="left:1276px;top:476px;width:1px;height:21px;background:#cfc1ee;"></div>
<div class="c" style="left:1372px;top:474px;width:96px;height:24px;border-top:1px solid #cfc1ee;background:#ece8fd;text-align:right;padding:4px 4px 0 0;-webkit-text-stroke:0.5px currentColor;letter-spacing:0px;"><span>0,00</span></div>
<div class="b" style="left:1372px;top:476px;width:1px;height:21px;background:#cfc1ee;"></div>
<div class="c" style="left:1468px;top:474px;width:96px;height:24px;border-top:1px solid #cfc1ee;background:#ece8fd;text-align:right;padding:4px 4px 0 0;-webkit-text-stroke:0.5px currentColor;letter-spacing:0px;"><span>0,00</span></div>
<div class="b" style="left:1468px;top:476px;width:1px;height:21px;background:#cfc1ee;"></div>
<div class="c" style="left:1564px;top:474px;width:96px;height:24px;border-top:1px solid #cfc1ee;background:#ece8fd;text-align:right;padding:4px 4px 0 0;-webkit-text-stroke:0.5px currentColor;letter-spacing:0px;"><span></span></div>
<div class="b" style="left:1564px;top:476px;width:1px;height:21px;background:#cfc1ee;"></div>
<div class="c" style="left:1660px;top:474px;width:96px;height:24px;border-top:1px solid #cfc1ee;background:#ece8fd;text-align:right;padding:4px 4px 0 0;-webkit-text-stroke:0.5px currentColor;letter-spacing:0px;"><span>0,00</span></div>
<div class="b" style="left:1660px;top:476px;width:1px;height:21px;background:#cfc1ee;"></div>
<div class="c" style="left:34px;top:498px;width:60px;height:24px;border-top:1px solid #cfc1ee;background:#ece8fd;text-align:center;padding:4px 0 0 2px;-webkit-text-stroke:0.5px currentColor;letter-spacing:0px;"><span>И4</span></div>
<div class="b" style="left:34px;top:498px;width:1px;height:24px;background:#cfc1ee;"></div>
<div class="c" style="left:94px;top:498px;width:132px;height:24px;border-top:1px solid #cfc1ee;background:#ece8fd;text-align:left;padding:4px 0 0 6px;-webkit-text-stroke:0.5px currentColor;letter-spacing:0.06px;"><span>ТСН-2001.12 п.3.3.4</span></div>
<div class="b" style="left:94px;top:500px;width:1px;height:21px;background:#cfc1ee;"></div>
<div class="c" style="left:226px;top:498px;width:186px;height:24px;border-top:1px solid #cfc1ee;background:#ece8fd;text-align:left;padding:4px 0 0 6px;-webkit-text-stroke:0.5px currentColor;letter-spacing:0.2px;"><span>в т.ч. производственная часть</span></div>
<div class="b" style="left:226px;top:500px;width:1px;height:21px;background:#cfc1ee;"></div>
<div class="c" style="left:412px;top:498px;width:96px;height:24px;border-top:1px solid #cfc1ee;background:#ece8fd;text-align:right;padding:4px 4px 0 0;-webkit-text-stroke:0.5px currentColor;letter-spacing:0px;"><span>544,71</span></div>
<div class="b" style="left:412px;top:500px;width:1px;height:21px;background:#cfc1ee;"></div>
<div class="c" style="left:508px;top:498px;width:96px;height:24px;border-top:1px solid #cfc1ee;background:#ece8fd;text-align:right;padding:4px 4px 0 0;-webkit-text-stroke:0.5px currentColor;letter-spacing:0px;"><span>0,00</span></div>
<div class="b" style="left:508px;top:500px;width:1px;height:21px;background:#cfc1ee;"></div>
<div class="c" style="left:604px;top:498px;width:96px;height:24px;border-top:1px solid #cfc1ee;background:#ece8fd;text-align:right;padding:4px 4px 0 0;-webkit-text-stroke:0.5px currentColor;letter-spacing:0px;"><span>0,00</span></div>
<div class="b" style="left:604px;top:500px;width:1px;height:21px;background:#cfc1ee;"></div>
<div class="c" style="left:700px;top:498px;width:96px;height:24px;border-top:1px solid #cfc1ee;background:#ece8fd;text-align:right;padding:4px 4px 0 0;-webkit-text-stroke:0.5px currentColor;letter-spacing:0px;"><span>0,00</span></div>
<div class="b" style="left:700px;top:500px;width:1px;height:21px;background:#cfc1ee;"></div>
<div class="c" style="left:796px;top:498px;width:96px;height:24px;border-top:1px solid #cfc1ee;background:#ece8fd;text-align:right;padding:4px 4px 0 0;-webkit-text-stroke:0.5px currentColor;letter-spacing:0px;"><span>544,71</span></div>
<div class="b" style="left:796px;top:500px;width:1px;height:21px;background:#cfc1ee;"></div>
<div class="c" style="left:892px;top:498px;width:96px;height:24px;border-top:1px solid #cfc1ee;background:#ece8fd;text-align:right;padding:4px 4px 0 0;-webkit-text-stroke:0.5px currentColor;letter-spacing:0px;"><span></span></div>
<div class="b" style="left:892px;top:500px;width:1px;height:21px;background:#cfc1ee;"></div>
<div class="c" style="left:988px;top:498px;width:96px;height:24px;border-top:1px solid #cfc1ee;background:#ece8fd;text-align:right;padding:4px 4px 0 0;-webkit-text-stroke:0.5px currentColor;letter-spacing:0px;"><span>5,45</span></div>
<div class="b" style="left:988px;top:500px;width:1px;height:21px;background:#cfc1ee;"></div>
<div class="c" style="left:1084px;top:498px;width:96px;height:24px;border-top:1px solid #cfc1ee;background:#ece8fd;text-align:right;padding:4px 4px 0 0;-webkit-text-stroke:0.5px currentColor;letter-spacing:0px;"><span>62,39</span></div>
<div class="b" style="left:1084px;top:500px;width:1px;height:21px;background:#cfc1ee;"></div>
<div class="c" style="left:1180px;top:498px;width:96px;height:24px;border-top:1px solid #cfc1ee;background:#ece8fd;text-align:right;padding:4px 4px 0 0;-webkit-text-stroke:0.5px currentColor;letter-spacing:0px;"><span>0,00</span></div>
<div class="b" style="left:1180px;top:500px;width:1px;height:21px;background:#cfc1ee;"></div>
<div class="c" style="left:1276px;top:498px;width:96px;height:24px;border-top:1px solid #cfc1ee;background:#ece8fd;text-align:right;padding:4px 4px 0 0;-webkit-text-stroke:0.5px currentColor;letter-spacing:0px;"><span>0,00</span></div>
<div class="b" style="left:1276px;top:500px;width:1px;height:21px;background:#cfc1ee;"></div>
<div class="c" style="left:1372px;top:498px;width:96px;height:24px;border-top:1px solid #cfc1ee;background:#ece8fd;text-align:right;padding:4px 4px 0 0;-webkit-text-stroke:0.5px currentColor;letter-spacing:0px;"><span>0,00</span></div>
<div class="b" style="left:1372px;top:500px;width:1px;height:21px;background:#cfc1ee;"></div>
<div class="c" style="left:1468px;top:498px;width:96px;height:24px;border-top:1px solid #cfc1ee;background:#ece8fd;text-align:right;padding:4px 4px 0 0;-webkit-text-stroke:0.5px currentColor;letter-spacing:0px;"><span>62,39</span></div>
<div class="b" style="left:1468px;top:500px;width:1px;height:21px;background:#cfc1ee;"></div>
<div class="c" style="left:1564px;top:498px;width:96px;height:24px;border-top:1px solid #cfc1ee;background:#ece8fd;text-align:right;padding:4px 4px 0 0;-webkit-text-stroke:0.5px currentColor;letter-spacing:0px;"><span></span></div>
<div class="b" style="left:1564px;top:500px;width:1px;height:21px;background:#cfc1ee;"></div>
<div class="c" style="left:1660px;top:498px;width:96px;height:24px;border-top:1px solid #cfc1ee;background:#ece8fd;text-align:right;padding:4px 4px 0 0;-webkit-text-stroke:0.5px currentColor;letter-spacing:0px;"><span>0,62</span></div>
<div class="b" style="left:1660px;top:500px;width:1px;height:21px;background:#cfc1ee;"></div>
<div class="b" style="left:34px;top:522px;width:1723px;height:1px;background:#cfc1ee;"></div>
<div class="b" style="left:227px;top:343px;width:186px;height:23px;border:1px solid #111;box-sizing:border-box;"></div>
<svg style="left:38px;top:346px" width="16" height="14" viewBox="38 346 16 14"><g stroke="#d1402a" stroke-width="0.9" fill="none" stroke-linecap="round"><path d="M42.4 355.6 H48.6" stroke-width="1.2"/><path d="M43.3 355.2 L45.5 351.7 L47.7 355.2"/><path d="M45.5 348.4 V350.6"/><path d="M42.3 350.3 L43.6 351.7 M48.7 350.3 L47.4 351.7"/><path d="M40.4 353.5 H42.8 M48.2 353.5 H50.6" stroke-width="1"/></g></svg>
<div style="position:absolute;left:0;top:0;width:1921px;height:920px;will-change:transform;"><div class="t tab" style="left:89px;top:40px;font-size:14px;line-height:16px;font-weight:400;color:#424242;letter-spacing:-0.15px;">Главная</div>
<div class="t tab" style="left:189px;top:40px;font-size:14px;line-height:16px;font-weight:400;color:#424242;letter-spacing:-0.15px;">Вставка</div>
<div class="t tab" style="left:290px;top:40px;font-size:14px;line-height:16px;font-weight:400;color:#424242;letter-spacing:-0.15px;">Объёмы</div>
<div class="t tab" style="left:392.5px;top:40px;font-size:14px;line-height:16px;font-weight:400;color:#424242;letter-spacing:-0.15px;">Выполнение</div>
<div class="t tab" style="left:521.5px;top:40px;font-size:14px;line-height:16px;font-weight:400;color:#424242;letter-spacing:-0.15px;">Вид</div>
<div class="t tab" style="left:595px;top:40px;font-size:14px;line-height:16px;font-weight:400;color:#424242;letter-spacing:-0.15px;">Операции</div>
<div class="t tab" style="left:707.5px;top:40px;font-size:14px;line-height:16px;font-weight:400;color:#424242;letter-spacing:-0.15px;">Отчет</div>
<div class="t tabb m" style="left:792.5px;top:40px;font-size:14px;line-height:16px;font-weight:700;color:#212121;letter-spacing:0px;transform:scaleX(0.915);transform-origin:0 0;">ОСР</div>
<div class="t rb m" style="left:-258.5px;width:600px;text-align:center;top:114px;font-size:11px;line-height:12px;font-weight:700;color:#212121;letter-spacing:0px;">Начисление</div>
<div class="t rb m" style="left:-177px;width:600px;text-align:center;top:114px;font-size:11px;line-height:12px;font-weight:700;color:#212121;letter-spacing:0px;">Исключить</div>
<div class="t rb m" style="left:-177px;width:600px;text-align:center;top:125px;font-size:11px;line-height:12px;font-weight:700;color:#212121;letter-spacing:0px;">из печати</div>
<div class="t rb m" style="left:-86px;width:600px;text-align:center;top:114px;font-size:11px;line-height:12px;font-weight:700;color:#212121;letter-spacing:0px;">Переместить</div>
<div class="t rb m" style="left:-86px;width:600px;text-align:center;top:125px;font-size:11px;line-height:12px;font-weight:700;color:#212121;letter-spacing:0px;">вверх</div>
<div class="t rb m" style="left:0px;width:600px;text-align:center;top:114px;font-size:11px;line-height:12px;font-weight:700;color:#a6a6a6;letter-spacing:0px;">Переместить</div>
<div class="t rb m" style="left:0px;width:600px;text-align:center;top:125px;font-size:11px;line-height:12px;font-weight:700;color:#a6a6a6;letter-spacing:0px;">вниз</div>
<div class="t rb m" style="left:98px;width:600px;text-align:center;top:114px;font-size:11px;line-height:12px;font-weight:700;color:#212121;letter-spacing:0px;">Обновление</div>
<div class="t rb m" style="left:98px;width:600px;text-align:center;top:125px;font-size:11px;line-height:12px;font-weight:700;color:#212121;letter-spacing:0px;">данных</div>
<div class="t rb m" style="left:184px;width:600px;text-align:center;top:114px;font-size:11px;line-height:12px;font-weight:700;color:#212121;letter-spacing:0px;">Поменять</div>
<div class="t rb m" style="left:184px;width:600px;text-align:center;top:125px;font-size:11px;line-height:12px;font-weight:700;color:#212121;letter-spacing:0px;">местами</div>
<div class="t rg" style="left:-258.5px;width:600px;text-align:center;top:140px;font-size:11px;line-height:12px;font-weight:400;color:#7a7a7a;letter-spacing:0px;">Добавление</div>
<div class="t rg" style="left:-176px;width:600px;text-align:center;top:140px;font-size:11px;line-height:12px;font-weight:400;color:#7a7a7a;letter-spacing:0px;">Исключение</div>
<div class="t rg" style="left:-42px;width:600px;text-align:center;top:140px;font-size:11px;line-height:12px;font-weight:400;color:#7a7a7a;letter-spacing:0px;">Навигация</div>
<div class="t fxt" style="left:162.3px;top:169px;font-size:11px;line-height:12px;font-weight:400;color:#212121;letter-spacing:-0.5px;">ТСН</div>
<div class="h hm" style="left:412px;top:193px;width:672px;height:25px;padding-left:1px;border-left:1px solid transparent;border-top:1px solid transparent;"><span><span style="letter-spacing:0.24px">Текущий уровень цен</span></span></div>
<div class="h hm" style="left:412px;top:218px;width:480px;height:24px;padding-left:1px;border-left:1px solid transparent;border-top:1px solid transparent;"><span><span style="letter-spacing:0.23px">Сметная стоимость, тыс.р.</span></span></div>
<div class="h hm" style="left:412px;top:242px;width:96px;height:52px;padding-left:1px;border-left:1px solid transparent;border-top:1px solid transparent;"><span><span style="letter-spacing:0.23px">Строительные</span></span></div>
<div class="h hm" style="left:508px;top:242px;width:96px;height:52px;padding-left:1px;border-left:1px solid transparent;border-top:1px solid transparent;"><span><span style="letter-spacing:0.6px">Монтажные</span></span></div>
<div class="h hm" style="left:604px;top:242px;width:96px;height:52px;padding-left:1px;border-left:1px solid transparent;border-top:1px solid transparent;"><span><span style="letter-spacing:0.0px">Оборудование</span></span></div>
<div class="h hm" style="left:700px;top:242px;width:96px;height:52px;padding-left:1px;border-left:1px solid transparent;border-top:1px solid transparent;"><span><span style="letter-spacing:0.22px">Прочие</span></span></div>
<div class="h hm" style="left:796px;top:242px;width:96px;height:52px;padding-left:1px;border-left:1px solid transparent;border-top:1px solid transparent;"><span><span style="letter-spacing:0.3px">Всего</span></span></div>
<div class="h hm" style="left:892px;top:218px;width:96px;height:76px;padding-left:1px;border-left:1px solid transparent;border-top:1px solid transparent;"><span><span style="letter-spacing:0.1px">Средства на</span><br><span style="letter-spacing:0.13px">оплату труда,</span><br><span style="letter-spacing:0.72px">тыс.р.</span></span></div>
<div class="h hm" style="left:988px;top:218px;width:96px;height:76px;padding-left:1px;border-left:1px solid transparent;border-top:1px solid transparent;"><span><span style="letter-spacing:0.35px">Стоимость</span><br><span style="letter-spacing:0.33px">единицы,</span><br><span style="letter-spacing:0.72px">тыс.р.</span></span></div>
<div class="h hm" style="left:1084px;top:193px;width:672px;height:25px;padding-left:1px;border-left:1px solid transparent;border-top:1px solid transparent;"><span><span style="letter-spacing:0.18px">Базовый уровень цен</span></span></div>
<div class="h hm" style="left:1084px;top:218px;width:480px;height:24px;padding-left:1px;border-left:1px solid transparent;border-top:1px solid transparent;"><span><span style="letter-spacing:0.23px">Сметная стоимость, тыс.р.</span></span></div>
<div class="h hm" style="left:1084px;top:242px;width:96px;height:52px;padding-left:1px;border-left:1px solid transparent;border-top:1px solid transparent;"><span><span style="letter-spacing:0.23px">Строительные</span></span></div>
<div class="h hm" style="left:1180px;top:242px;width:96px;height:52px;padding-left:1px;border-left:1px solid transparent;border-top:1px solid transparent;"><span><span style="letter-spacing:0.6px">Монтажные</span></span></div>
<div class="h hm" style="left:1276px;top:242px;width:96px;height:52px;padding-left:1px;border-left:1px solid transparent;border-top:1px solid transparent;"><span><span style="letter-spacing:0.0px">Оборудование</span></span></div>
<div class="h hm" style="left:1372px;top:242px;width:96px;height:52px;padding-left:1px;border-left:1px solid transparent;border-top:1px solid transparent;"><span><span style="letter-spacing:0.22px">Прочие</span></span></div>
<div class="h hm" style="left:1468px;top:242px;width:96px;height:52px;padding-left:1px;border-left:1px solid transparent;border-top:1px solid transparent;"><span><span style="letter-spacing:0.3px">Всего</span></span></div>
<div class="h hm" style="left:1564px;top:218px;width:96px;height:76px;padding-left:1px;border-left:1px solid transparent;border-top:1px solid transparent;"><span><span style="letter-spacing:0.1px">Средства на</span><br><span style="letter-spacing:0.13px">оплату труда,</span><br><span style="letter-spacing:0.72px">тыс.р.</span></span></div>
<div class="h hm" style="left:1660px;top:218px;width:96px;height:76px;padding-left:1px;border-left:1px solid transparent;border-top:1px solid transparent;"><span><span style="letter-spacing:0.35px">Стоимость</span><br><span style="letter-spacing:0.33px">единицы,</span><br><span style="letter-spacing:0.72px">тыс.р.</span></span></div>
<div class="c" style="left:34px;top:294px;width:60px;height:24px;border-top:1px solid transparent;color:#333;text-align:center;padding:4px 0 0 2px;"><span>1</span></div>
<div class="c" style="left:94px;top:294px;width:132px;height:24px;border-top:1px solid transparent;color:#333;text-align:left;padding:4px 0 0 6px;"><span>Номер/Шифр</span></div>
<div class="c" style="left:226px;top:294px;width:186px;height:24px;border-top:1px solid transparent;color:#333;text-align:left;padding:4px 0 0 6px;"><span>Наименование</span></div>
<div class="c" style="left:412px;top:294px;width:96px;height:24px;border-top:1px solid transparent;color:#333;text-align:right;padding:4px 4px 0 0;"><span>0,00</span></div>
<div class="c" style="left:508px;top:294px;width:96px;height:24px;border-top:1px solid transparent;color:#333;text-align:right;padding:4px 4px 0 0;"><span>0,00</span></div>
<div class="c" style="left:604px;top:294px;width:96px;height:24px;border-top:1px solid transparent;color:#333;text-align:right;padding:4px 4px 0 0;"><span>0,00</span></div>
<div class="c" style="left:700px;top:294px;width:96px;height:24px;border-top:1px solid transparent;color:#333;text-align:right;padding:4px 4px 0 0;"><span>0,00</span></div>
<div class="c" style="left:796px;top:294px;width:96px;height:24px;border-top:1px solid transparent;color:#333;text-align:right;padding:4px 4px 0 0;"><span>0,00</span></div>
<div class="c" style="left:892px;top:294px;width:96px;height:24px;border-top:1px solid transparent;color:#333;text-align:right;padding:4px 4px 0 0;"><span>0,00</span></div>
<div class="c" style="left:988px;top:294px;width:96px;height:24px;border-top:1px solid transparent;color:#333;text-align:right;padding:4px 4px 0 0;"><span>0,00</span></div>
<div class="c" style="left:1084px;top:294px;width:96px;height:24px;border-top:1px solid transparent;color:#333;text-align:right;padding:4px 4px 0 0;"><span>0,00</span></div>
<div class="c" style="left:1180px;top:294px;width:96px;height:24px;border-top:1px solid transparent;color:#333;text-align:right;padding:4px 4px 0 0;"><span>0,00</span></div>
<div class="c" style="left:1276px;top:294px;width:96px;height:24px;border-top:1px solid transparent;color:#333;text-align:right;padding:4px 4px 0 0;"><span>0,00</span></div>
<div class="c" style="left:1372px;top:294px;width:96px;height:24px;border-top:1px solid transparent;color:#333;text-align:right;padding:4px 4px 0 0;"><span>0,00</span></div>
<div class="c" style="left:1468px;top:294px;width:96px;height:24px;border-top:1px solid transparent;color:#333;text-align:right;padding:4px 4px 0 0;"><span>0,00</span></div>
<div class="c" style="left:1564px;top:294px;width:96px;height:24px;border-top:1px solid transparent;color:#333;text-align:right;padding:4px 4px 0 0;"><span>0,00</span></div>
<div class="c" style="left:1660px;top:294px;width:96px;height:24px;border-top:1px solid transparent;color:#333;text-align:right;padding:4px 4px 0 0;"><span>0,00</span></div>
<div class="c" style="left:34px;top:318px;width:60px;height:24px;border-top:1px solid transparent;color:#333;text-align:center;padding:4px 0 0 2px;"><span>2</span></div>
<div class="c" style="left:94px;top:318px;width:132px;height:24px;border-top:1px solid transparent;color:#333;text-align:left;padding:4px 0 0 6px;"><span>01-01</span></div>
<div class="c" style="left:226px;top:318px;width:186px;height:24px;border-top:1px solid transparent;color:#333;text-align:left;padding:4px 0 0 6px;"><span>Пример сметы по ТСН МГЭ</span></div>
<div class="c" style="left:412px;top:318px;width:96px;height:24px;border-top:1px solid transparent;color:#333;text-align:right;padding:4px 4px 0 0;"><span>512,91</span></div>
<div class="c" style="left:508px;top:318px;width:96px;height:24px;border-top:1px solid transparent;color:#333;text-align:right;padding:4px 4px 0 0;"><span>0,00</span></div>
<div class="c" style="left:604px;top:318px;width:96px;height:24px;border-top:1px solid transparent;color:#333;text-align:right;padding:4px 4px 0 0;"><span>0,00</span></div>
<div class="c" style="left:700px;top:318px;width:96px;height:24px;border-top:1px solid transparent;color:#333;text-align:right;padding:4px 4px 0 0;"><span>0,00</span></div>
<div class="c" style="left:796px;top:318px;width:96px;height:24px;border-top:1px solid transparent;color:#333;text-align:right;padding:4px 4px 0 0;"><span>512,91</span></div>
<div class="c" style="left:892px;top:318px;width:96px;height:24px;border-top:1px solid transparent;color:#333;text-align:right;padding:4px 4px 0 0;"><span>132,99</span></div>
<div class="c" style="left:988px;top:318px;width:96px;height:24px;border-top:1px solid transparent;color:#333;text-align:right;padding:4px 4px 0 0;"><span>5,13</span></div>
<div class="c" style="left:1084px;top:318px;width:96px;height:24px;border-top:1px solid transparent;color:#333;text-align:right;padding:4px 4px 0 0;"><span>58,75</span></div>
<div class="c" style="left:1180px;top:318px;width:96px;height:24px;border-top:1px solid transparent;color:#333;text-align:right;padding:4px 4px 0 0;"><span>0,00</span></div>
<div class="c" style="left:1276px;top:318px;width:96px;height:24px;border-top:1px solid transparent;color:#333;text-align:right;padding:4px 4px 0 0;"><span>0,00</span></div>
<div class="c" style="left:1372px;top:318px;width:96px;height:24px;border-top:1px solid transparent;color:#333;text-align:right;padding:4px 4px 0 0;"><span>0,00</span></div>
<div class="c" style="left:1468px;top:318px;width:96px;height:24px;border-top:1px solid transparent;color:#333;text-align:right;padding:4px 4px 0 0;"><span>58,75</span></div>
<div class="c" style="left:1564px;top:318px;width:96px;height:24px;border-top:1px solid transparent;color:#333;text-align:right;padding:4px 4px 0 0;"><span>4,42</span></div>
<div class="c" style="left:1660px;top:318px;width:96px;height:24px;border-top:1px solid transparent;color:#333;text-align:right;padding:4px 4px 0 0;"><span>0,59</span></div>
<div class="c" style="left:34px;top:342px;width:60px;height:24px;border-top:1px solid transparent;color:#333;text-align:center;padding:4px 0 0 2px;"><span>3</span></div>
<div class="c" style="left:94px;top:342px;width:132px;height:24px;border-top:1px solid transparent;color:#333;text-align:left;padding:4px 0 0 6px;"><span></span></div>
<div class="c" style="left:226px;top:342px;width:186px;height:24px;border-top:1px solid transparent;color:#333;text-align:left;padding:4px 0 0 6px;"><span>ТСН</span></div>
<div class="c" style="left:412px;top:342px;width:96px;height:24px;border-top:1px solid transparent;color:#333;text-align:right;padding:4px 4px 0 0;"><span>0,00</span></div>
<div class="c" style="left:508px;top:342px;width:96px;height:24px;border-top:1px solid transparent;color:#333;text-align:right;padding:4px 4px 0 0;"><span>0,00</span></div>
<div class="c" style="left:604px;top:342px;width:96px;height:24px;border-top:1px solid transparent;color:#333;text-align:right;padding:4px 4px 0 0;"><span>0,00</span></div>
<div class="c" style="left:700px;top:342px;width:96px;height:24px;border-top:1px solid transparent;color:#333;text-align:right;padding:4px 4px 0 0;"><span>0,00</span></div>
<div class="c" style="left:796px;top:342px;width:96px;height:24px;border-top:1px solid transparent;color:#333;text-align:right;padding:4px 4px 0 0;"><span>0,00</span></div>
<div class="c" style="left:892px;top:342px;width:96px;height:24px;border-top:1px solid transparent;color:#333;text-align:right;padding:4px 4px 0 0;"><span>0,00</span></div>
<div class="c" style="left:988px;top:342px;width:96px;height:24px;border-top:1px solid transparent;color:#333;text-align:right;padding:4px 4px 0 0;"><span>0,00</span></div>
<div class="c" style="left:1084px;top:342px;width:96px;height:24px;border-top:1px solid transparent;color:#333;text-align:right;padding:4px 4px 0 0;"><span>0,00</span></div>
<div class="c" style="left:1180px;top:342px;width:96px;height:24px;border-top:1px solid transparent;color:#333;text-align:right;padding:4px 4px 0 0;"><span>0,00</span></div>
<div class="c" style="left:1276px;top:342px;width:96px;height:24px;border-top:1px solid transparent;color:#333;text-align:right;padding:4px 4px 0 0;"><span>0,00</span></div>
<div class="c" style="left:1372px;top:342px;width:96px;height:24px;border-top:1px solid transparent;color:#333;text-align:right;padding:4px 4px 0 0;"><span>0,00</span></div>
<div class="c" style="left:1468px;top:342px;width:96px;height:24px;border-top:1px solid transparent;color:#333;text-align:right;padding:4px 4px 0 0;"><span>0,00</span></div>
<div class="c" style="left:1564px;top:342px;width:96px;height:24px;border-top:1px solid transparent;color:#333;text-align:right;padding:4px 4px 0 0;"><span>0,00</span></div>
<div class="c" style="left:1660px;top:342px;width:96px;height:24px;border-top:1px solid transparent;color:#333;text-align:right;padding:4px 4px 0 0;"><span>0,00</span></div>
<div class="t sb m" style="left:1501.5px;top:894px;font-size:14px;line-height:16px;font-weight:700;color:#212121;letter-spacing:0.07px;">Всего</div>
<div class="t sr" style="left:1557px;top:894.5px;font-size:14px;line-height:16px;font-weight:400;color:#424242;letter-spacing:-0.15px;">Б: 62,39 тыс. р</div>
<div class="t sr" style="left:1668.5px;top:894.5px;font-size:14px;line-height:16px;font-weight:400;color:#424242;letter-spacing:-0.15px;">Т: 544,71 тыс. р</div></div>
<div style="position:absolute;left:0;top:0;width:1921px;height:920px;will-change:transform;"><div class="b" style="left:312px;top:369px;width:172px;height:138px;background:#fff;box-shadow:0 3px 7px rgba(0,0,0,.32),0 0 2px rgba(0,0,0,.2);"></div>
<div class="t mb" style="left:323px;top:376px;font-size:11px;line-height:12px;font-weight:700;color:#212121;letter-spacing:-0.3px;">Вставка:</div>
<div class="t mi" style="left:346px;top:405px;font-size:11px;line-height:12px;font-weight:400;color:#212121;letter-spacing:0px;">Начисление</div>
<div class="t mi" style="left:346px;top:436px;font-size:11px;line-height:12px;font-weight:400;color:#212121;letter-spacing:0.18px;">Исключить из расчета</div>
<div class="t mi" style="left:346px;top:460px;font-size:11px;line-height:12px;font-weight:400;color:#212121;letter-spacing:0.22px;">Исключить из печати</div>
<div class="t mi" style="left:346px;top:484px;font-size:11px;line-height:12px;font-weight:400;color:#212121;letter-spacing:0px;">Удалить</div>
<svg style="left:320px;top:400px" width="20" height="100" viewBox="320 400 20 100">
<!-- doc small -->
<rect x="324.5" y="406.5" width="10" height="12" fill="#fff" stroke="#a8a8a8" stroke-width="0.8"/>
<rect x="325.4" y="408.2" width="8.2" height="0.8" fill="#c8c8c8"/>
<rect x="325.4" y="409.8" width="8.2" height="1.1" fill="#5e35b1"/>
<rect x="325.4" y="412.6" width="8.2" height="0.9" fill="#cfcfcf"/>
<rect x="331" y="416" width="2.4" height="1" fill="#c4c4c4"/>
<!-- exclude calc -->
<rect x="323.5" y="438" width="7.5" height="3" fill="#3f2a96"/>
<rect x="323.5" y="446.2" width="7.5" height="3" fill="#3f2a96"/>
<rect x="328.6" y="442" width="7.6" height="3.2" fill="#c8472e"/>
<path d="M323.5 443.7 H327 M325.7 442.3 L327.2 443.7 L325.7 445.1" fill="none" stroke="#3f2a96" stroke-width="0.8"/>
<!-- printer small -->
<g fill="none" stroke="#c8472e" stroke-width="1.3" stroke-linejoin="round">
<rect x="326.6" y="463.4" width="5.8" height="3"/>
<path d="M326.6 470.3 H325.2 Q324.6 470.3 324.6 469.7 V467.2 Q324.6 466.4 325.4 466.4 H333.6 Q334.4 466.4 334.4 467.2 V469.7 Q334.4 470.3 333.8 470.3 H332.4"/>
<rect x="326.6" y="469" width="5.8" height="3.2"/>
</g>
<!-- trash -->
<path d="M325.3 489 H333.7 V495.8 Q333.7 497.2 332.3 497.2 H326.7 Q325.3 497.2 325.3 495.8 Z" fill="#c8472e"/>
<path d="M324.3 486.2 H327.4 L328 485.3 H331 L331.6 486.2 H334.7 V487.8 H324.3 Z" fill="#c8472e"/>
</svg>
</div>
<div class="b" style="left:34px;top:888px;width:1886px;height:1px;background:#cfc1ee;"></div>
<div class="b" style="left:34px;top:889px;width:200px;height:30px;background:#ffecb3;"></div>
<div class="b" style="left:34px;top:889px;width:200px;height:4px;background:#ffa000;"></div>
<div class="t bt m" style="left:82.5px;top:894.7px;font-size:14px;line-height:16px;font-weight:700;color:#212121;letter-spacing:0.09px;">Объектная смета...</div>
<svg style="left:56px;top:893px" width="24" height="24" viewBox="56 893 24 24">
<g fill="none" stroke="#e8b866" stroke-width="0.8">
<path d="M58.2 899.6 H74.8 M58.6 899.4 L67.3 895 L74.6 899.4 M67.3 895 V899.6"/>
</g>
<rect x="64.8" y="899.6" width="1.9" height="13.2" fill="#eec880"/>
<path d="M63.3 913 L65 911.2 H66.7 V913 Z" fill="#e8b866"/>
<rect x="59.2" y="901" width="2.8" height="3" fill="#9a86d6"/>
<ellipse cx="60.6" cy="905.2" rx="1.5" ry="1.5" fill="#4d2ea6"/>
<rect x="67" y="901" width="8.1" height="12" fill="#4d2ea6"/>
<rect x="66.2" y="912" width="9.7" height="1" fill="#4d2ea6"/>
<g fill="#8f7ad0"><rect x="68.3" y="902.3" width="5.5" height="1"/><rect x="68.3" y="904.3" width="5.5" height="1"/><rect x="68.3" y="906.3" width="5.5" height="1"/><rect x="68.3" y="908.3" width="5.5" height="1"/></g>
<rect x="70.2" y="911" width="1.8" height="1.4" fill="#ffe9b0"/>
<path d="M217.8 899.4 L226.8 908.4 M226.8 899.4 L217.8 908.4" stroke="#212121" stroke-width="1.7" fill="none" transform="translate(0,0)"/>
</svg>

<div class="b" style="left:1488px;top:890px;width:1px;height:29px;background:#e0e0e0;"></div>
<svg style="left:0;top:0" width="1921" height="920" viewBox="0 0 1921 920">
<rect x="3" y="66" width="78.8" height="71.6" fill="none" stroke="#ec0000" stroke-width="3"/>
<rect x="310.3" y="397" width="172.7" height="28.8" fill="none" stroke="#ec0000" stroke-width="3"/>
<path d="M90.6 158 L167.6 352.3 L289 402" fill="none" stroke="#ec0000" stroke-width="3.2" stroke-linejoin="miter"/>
<path d="M82.8 137.6 L83.3 161 L98 155.3 Z" fill="#ec0000"/>
<path d="M309.5 410.6 L290.9 394.7 L285 408.7 Z" fill="#ec0000"/>
</svg>
<div class="b" style="left:0px;top:0px;width:1921px;height:1px;background:#767676;"></div>
<div class="b" style="left:0px;top:919px;width:1921px;height:1px;background:#767676;"></div>
<div class="b" style="left:0px;top:0px;width:1px;height:920px;background:#767676;"></div>
<div class="b" style="left:1920px;top:0px;width:1px;height:920px;background:#767676;"></div>
</body></html>
